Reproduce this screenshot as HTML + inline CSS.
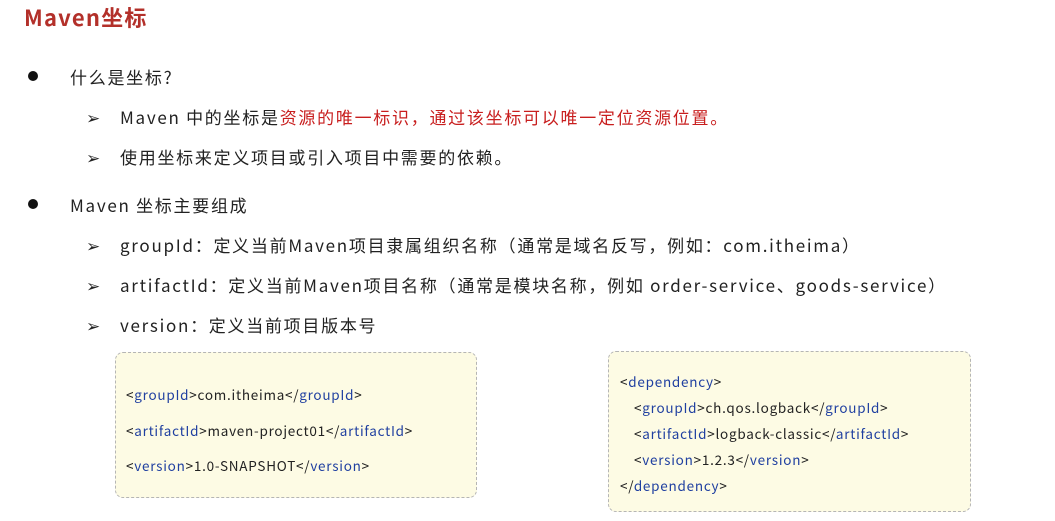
<!DOCTYPE html>
<html><head><meta charset="utf-8"><style>
body{margin:0;width:1055px;height:521px;background:#fff;position:relative;overflow:hidden;font-family:"Noto Sans CJK SC","Liberation Sans",sans-serif;color:#222}
.a{position:absolute;white-space:nowrap}
.t{left:24px;top:2px;font-size:22px;line-height:30px;font-weight:bold;color:#b3302a;letter-spacing:1.2px}
.l{font-size:17px;line-height:22px;letter-spacing:1.72px}
.dot{position:absolute;width:10px;height:10px;border-radius:50%;background:#111}
.r{color:#c81e1e}
.box{position:absolute;background:#fdfbe4;border:1px dashed #b5b5b5;border-radius:8px}
.c{font-size:13.5px;line-height:18px;letter-spacing:0.75px}
.b{color:#1f3fa0}
</style></head><body>
<div class="a t">Maven坐标</div>
<div class="dot" style="left:28px;top:71px"></div>
<div class="a l" style="left:70px;top:66px">什么是坐标?</div>
<div class="a l" style="left:86px;top:106px">➢</div>
<div class="a l" style="left:120px;top:106px">Maven 中的坐标是<span class="r">资源的唯一标识，通过该坐标可以唯一定位资源位置。</span></div>
<div class="a l" style="left:86px;top:146px">➢</div>
<div class="a l" style="left:120px;top:146px">使用坐标来定义项目或引入项目中需要的依赖。</div>
<div class="dot" style="left:28px;top:199px"></div>
<div class="a l" style="left:70px;top:194px">Maven 坐标主要组成</div>
<div class="a l" style="left:86px;top:234px">➢</div>
<div class="a l" style="left:120px;top:234px">groupId：定义当前Maven项目隶属组织名称（通常是域名反写，例如：com.itheima）</div>
<div class="a l" style="left:86px;top:274px">➢</div>
<div class="a l" style="left:120px;top:274px">artifactId：定义当前Maven项目名称（通常是模块名称，例如 order-service、goods-service）</div>
<div class="a l" style="left:86px;top:314px">➢</div>
<div class="a l" style="left:120px;top:314px">version：定义当前项目版本号</div>
<div class="box" style="left:115px;top:352px;width:360px;height:144px"></div>
<div class="a c" style="left:126px;top:385px">&lt;<span class="b">groupId</span>&gt;com.itheima&lt;/<span class="b">groupId</span>&gt;</div>
<div class="a c" style="left:126px;top:421px">&lt;<span class="b">artifactId</span>&gt;maven-project01&lt;/<span class="b">artifactId</span>&gt;</div>
<div class="a c" style="left:126px;top:456px">&lt;<span class="b">version</span>&gt;1.0-SNAPSHOT&lt;/<span class="b">version</span>&gt;</div>
<div class="box" style="left:608px;top:351px;width:361px;height:159px"></div>
<div class="a c" style="left:620px;top:372px">&lt;<span class="b">dependency</span>&gt;</div>
<div class="a c" style="left:634px;top:398px">&lt;<span class="b">groupId</span>&gt;ch.qos.logback&lt;/<span class="b">groupId</span>&gt;</div>
<div class="a c" style="left:634px;top:424px">&lt;<span class="b">artifactId</span>&gt;logback-classic&lt;/<span class="b">artifactId</span>&gt;</div>
<div class="a c" style="left:634px;top:450px">&lt;<span class="b">version</span>&gt;1.2.3&lt;/<span class="b">version</span>&gt;</div>
<div class="a c" style="left:620px;top:476px">&lt;/<span class="b">dependency</span>&gt;</div>
</body></html>
